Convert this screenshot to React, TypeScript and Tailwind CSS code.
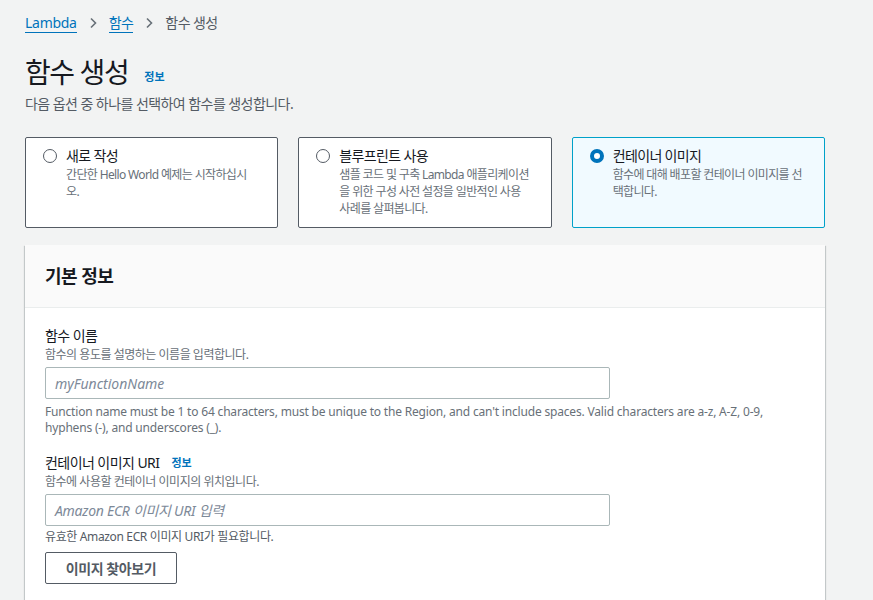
import React from "react";

const font = { fontFamily: '"Noto Sans", "Noto Sans CJK KR", sans-serif' };

function Radio({ checked }: { checked?: boolean }) {
  return checked ? (
    <span className="mt-[3px] box-border inline-block h-[14px] w-[14px] shrink-0 rounded-full border-[4px] border-[#0073bb] bg-white" />
  ) : (
    <span className="mt-[3px] box-border inline-block h-[14px] w-[14px] shrink-0 rounded-full border-[1.5px] border-[#545b64] bg-white" />
  );
}

function Card({ title, lines, checked }: { title: string; lines: string[]; checked?: boolean }) {
  return (
    <div
      className={
        "flex h-[91px] gap-[9px] rounded-[2px] border px-[17px] pt-[8px] " +
        (checked ? "border-[#00a1c9] bg-[#f1faff]" : "border-[#545b64] bg-white")
      }
    >
      <Radio checked={checked} />
      <div className="tracking-[-0.04em]">
        <div className="text-[14px] leading-[20px] text-[#16191f]">{title}</div>
        {lines.map((l) => (
          <div key={l} className="whitespace-nowrap text-[12px] leading-[17px] text-[#687078]">
            {l}
          </div>
        ))}
      </div>
    </div>
  );
}

function Chevron() {
  return (
    <svg width="10" height="12" viewBox="0 0 10 12" className="text-[#687078]">
      <path d="M3 1.5 L7.5 6 L3 10.5" fill="none" stroke="currentColor" strokeWidth="1.6" />
    </svg>
  );
}

export default function App() {
  return (
    <div style={font} className="min-h-[600px] bg-[#f2f3f3] px-[25px] pt-[13px] text-[#16191f]">
      <div className="flex items-center gap-[11px] text-[14px] leading-[20px]">
        <span className="border-b border-[#0073bb] leading-[18px] tracking-[-0.02em] text-[#0073bb]">Lambda</span>
        <Chevron />
        <span className="border-b border-[#0073bb] leading-[18px] tracking-[-0.04em] text-[#0073bb]">함수</span>
        <Chevron />
        <span className="tracking-[-0.04em] text-[#545b64]">함수 생성</span>
      </div>

      <div className="mt-[21px] flex items-end gap-[16px]">
        <h1 className="text-[28px] font-normal leading-[36px] tracking-[-0.05em]">함수 생성</h1>
        <span className="mb-[5px] text-[11px] font-bold text-[#0073bb]">정보</span>
      </div>
      <p className="mt-[4px] text-[14px] leading-[20px] tracking-[-0.04em] text-[#545b64]">
        다음 옵션 중 하나를 선택하여 함수를 생성합니다.
      </p>

      <div className="mt-[23px] grid w-[800px] grid-cols-3 gap-[20px]">
        <Card title="새로 작성" lines={["간단한 Hello World 예제는 시작하십시", "오."]} />
        <Card
          title="블루프린트 사용"
          lines={["샘플 코드 및 구축 Lambda 애플리케이션", "을 위한 구성 사전 설정을 일반적인 사용", "사례를 살펴봅니다."]}
        />
        <Card title="컨테이너 이미지" lines={["함수에 대해 배포할 컨테이너 이미지를 선", "택합니다."]} checked />
      </div>

      <div className="mt-[17px] w-[800px] bg-white shadow-[0_1px_1px_0_rgba(0,28,36,0.3),1px_1px_1px_0_rgba(0,28,36,0.15),-1px_1px_1px_0_rgba(0,28,36,0.15)]">
        <div className="flex h-[63px] items-center border-b border-[#eaeded] bg-[#fafafa] px-[20px]">
          <h2 className="text-[18px] font-bold leading-[24px] tracking-[-0.03em]">기본 정보</h2>
        </div>
        <div className="px-[20px] pb-[20px] pt-[18px]">
          <div className="text-[14px] leading-[20px] tracking-[-0.04em]">함수 이름</div>
          <div className="mt-[1px] text-[12px] leading-[16px] tracking-[-0.04em] text-[#687078]">
            함수의 용도를 설명하는 이름을 입력합니다.
          </div>
          <div className="mt-[4px] flex h-[32px] w-[565px] items-center rounded-[2px] border border-[#aab7b8] px-[9px]">
            <span className="text-[14px] italic text-[#7d8998]">myFunctionName</span>
          </div>
          <div className="mt-[5px] whitespace-nowrap text-[12px] leading-[16px] tracking-[-0.015em] text-[#687078]">
            Function name must be 1 to 64 characters, must be unique to the Region, and can't include spaces. Valid
            characters are a-z, A-Z, 0-9,
            <br />
            hyphens (-), and underscores (_).
          </div>

          <div className="mt-[17px] flex items-center gap-[12px]">
            <span className="text-[14px] leading-[20px] tracking-[-0.04em]">컨테이너 이미지 URI</span>
            <span className="text-[11px] font-bold text-[#0073bb]">정보</span>
          </div>
          <div className="mt-[1px] text-[12px] leading-[16px] tracking-[-0.04em] text-[#687078]">
            함수에 사용할 컨테이너 이미지의 위치입니다.
          </div>
          <div className="mt-[4px] flex h-[32px] w-[565px] items-center rounded-[2px] border border-[#aab7b8] px-[9px]">
            <span className="text-[14px] italic tracking-[-0.02em] text-[#7d8998]">Amazon ECR 이미지 URI 입력</span>
          </div>
          <div className="mt-[3px] text-[12px] leading-[16px] tracking-[-0.03em] text-[#545b64]">
            유효한 Amazon ECR 이미지 URI가 필요합니다.
          </div>
          <button className="mt-[7px] h-[32px] w-[132px] rounded-[2px] border border-[#545b64] bg-white text-[14px] font-bold tracking-[-0.03em] text-[#545b64]">
            이미지 찾아보기
          </button>
        </div>
      </div>
    </div>
  );
}
